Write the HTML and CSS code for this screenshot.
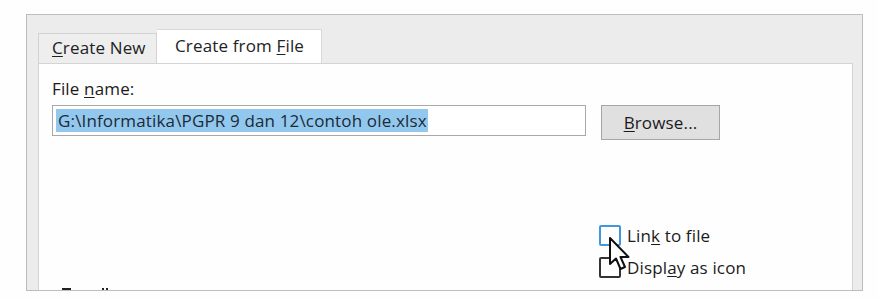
FILE: index.html
```html
<!DOCTYPE html>
<html>
<head>
<meta charset="utf-8">
<link rel="stylesheet" href="styles.css">
</head>
<body>
<div class="page">
  <div class="dialog">
    <div class="tabs">
      <div class="tab"><u>C</u>reate New</div>
      <div class="tab active">Create from <u>F</u>ile</div>
    </div>
    <div class="panel">
      <div class="label">File <u>n</u>ame:</div>
      <div class="row">
        <div class="input"><span class="sel">G:\Informatika\PGPR 9 dan 12\contoh ole.xlsx</span></div>
        <div class="button"><u>B</u>rowse...</div>
      </div>
      <div class="checks">
        <div class="check"><span class="box focus"></span><span>Lin<u>k</u> to file</span></div>
        <div class="check"><span class="box"></span><span>Displ<u>a</u>y as icon</span></div>
        <svg class="cursor" width="24" height="36" viewBox="0 0 24 36">
          <path d="M2 2 L2 28 L8 22.5 L12.5 33 L17 31 L12.5 21 L20.5 21 Z" fill="#fff" stroke="#111" stroke-width="2" stroke-linejoin="round"/>
        </svg>
      </div>
      <div class="marks"><span class="m1"></span><span class="m2"></span><span class="m3"></span></div>
    </div>
  </div>
</div>
</body>
</html>
```
FILE: styles.css
```css
html, body {
  margin: 0;
  padding: 0;
  background: #fefefe;
}
.page {
  padding: 14px 0 0 26px;
  font-family: "Open Sans", "Noto Sans", sans-serif;
  font-size: 17px;
  letter-spacing: 0.15px;
  color: #1b1b1b;
}
.dialog {
  width: 837px;
  height: 277px;
  border: 1px solid #bdbdbd;
  background: #ececec;
  padding: 0 9px 0 11px;
  box-sizing: border-box;
  display: flex;
  flex-direction: column;
}
.tabs {
  display: flex;
  align-items: flex-end;
  height: 48px;
  flex: none;
}
.tab {
  box-sizing: border-box;
  height: 30px;
  padding: 0 0 0 13px;
  width: 119px;
  border: 1px solid #d2d2d2;
  border-bottom: none;
  background: #eeeeee;
  line-height: 28px;
  color: #222;
  white-space: nowrap;
}
.tab.active {
  height: 35px;
  width: 165px;
  padding-left: 18px;
  background: #ffffff;
  border-color: #d9d9d9;
  border-left: none;
  line-height: 32px;
  position: relative;
  top: 1px;
}
.panel {
  flex: 1;
  background: #fefefe;
  border: 1px solid #d4d4d4;
  border-bottom: none;
  padding: 13px 0 0 13px;
  position: relative;
  overflow: hidden;
}
.label {
  line-height: 24px;
  height: 25px;
}
.row {
  display: flex;
  align-items: flex-start;
  margin-top: 3px;
}
.input {
  box-sizing: border-box;
  width: 534px;
  height: 31px;
  border: 1px solid #a8a8a8;
  padding: 3px 0 0 3px;
  background: #fff;
}
.sel {
  display: inline-block;
  background: #92c8ee;
  color: #1d2a36;
  line-height: 23px;
  padding: 0 1px 0 2px;
}
.button {
  box-sizing: border-box;
  margin-left: 15px;
  width: 119px;
  height: 35px;
  border: 1px solid #a6a6a6;
  background: #e0e0e0;
  text-align: center;
  line-height: 33px;
}
.checks {
  margin: 84px 0 0 547px;
  display: flex;
  flex-direction: column;
  gap: 10px;
  position: relative;
  width: 200px;
}
.check {
  display: flex;
  align-items: center;
  gap: 6px;
  height: 22px;
  line-height: 22px;
}
.check span:last-child {
  position: relative;
  top: 1px;
}
.box {
  box-sizing: border-box;
  width: 22px;
  height: 21px;
  border: 2px solid #333;
  border-radius: 2px;
  background: #fff;
  flex: none;
}
.box.focus {
  border-color: #3f97e0;
}
.cursor {
  position: absolute;
  left: 9px;
  top: 12px;
}
.marks {
  position: absolute;
  left: 0;
  bottom: 0;
  width: 100%;
  height: 2px;
}
.marks span {
  position: absolute;
  bottom: 0;
  height: 2px;
  background: #222;
}
.m1 { left: 23px; width: 9px; }
.m2 { left: 63px; width: 2px; }
.m3 { left: 67px; width: 2px; }
u {
  text-decoration-thickness: 1px;
  text-underline-offset: 2px;
}
```
